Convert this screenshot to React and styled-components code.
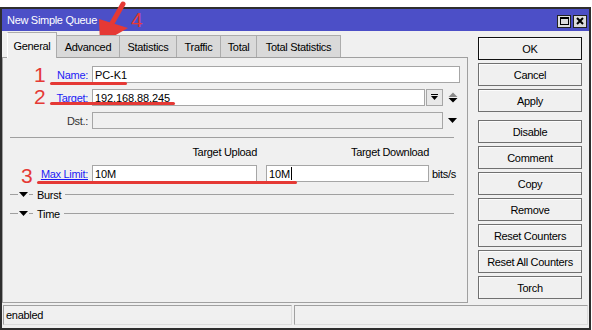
import React from 'react';
import styled, { createGlobalStyle } from 'styled-components';

const GlobalStyle = createGlobalStyle`
  html, body {
    margin: 0;
    padding: 0;
    background: #fff;
  }
  body {
    font-family: "Liberation Sans", Arial, sans-serif;
    font-size: 11px;
    letter-spacing: -0.3px;
    color: #000;
  }
`;

const Root = styled.div`
  position: relative;
  width: 592px;
  height: 330px;
  overflow: hidden;
  background: #fff;
`;

const Window = styled.div`
  margin-top: 7px;
  width: 591px;
  height: 323px;
  box-sizing: border-box;
  border: 2px solid #2e2e2e;
  background: #f0f0f0;
  display: flex;
  flex-direction: column;
`;

const TitleBar = styled.div`
  height: 22px;
  flex: none;
  background: #4c4fc7;
  color: #fff;
  display: flex;
  align-items: center;
  justify-content: space-between;
  padding-left: 5px;
  padding-right: 2px;
`;

const TitleControls = styled.div`
  display: flex;
  gap: 2px;
  margin-top: 2px;
`;

const TitleButton = styled.div`
  width: 14px;
  height: 13px;
  box-sizing: border-box;
  border: 1px solid #222;
  background: #dcdcdc;
  display: flex;
  align-items: center;
  justify-content: center;
`;

const Body = styled.div`
  display: flex;
  height: 272px;
  flex: none;
`;

const LeftColumn = styled.div`
  width: 466px;
  display: flex;
  flex-direction: column;
`;

const TabStrip = styled.div`
  display: flex;
  align-items: flex-end;
  height: 26px;
  padding-left: 5px;
  position: relative;
  z-index: 1;
`;

const Tab = styled.div`
  box-sizing: border-box;
  width: ${p => p.$w}px;
  height: ${p => (p.$active ? 26 : 22)}px;
  margin-bottom: ${p => (p.$active ? -1 : 0)}px;
  background: ${p => (p.$active ? '#f0f0f0' : '#d9d9d9')};
  border: 1px solid #acacac;
  border-bottom: none;
  border-left-color: ${p => (p.$active ? '#fff' : '#acacac')};
  display: flex;
  align-items: center;
  justify-content: center;
  padding-top: ${p => (p.$active ? 0 : 1)}px;
  margin-left: ${p => (p.$first ? 0 : -1)}px;
`;

const Panel = styled.div`
  height: 246px;
  box-sizing: border-box;
  border: 1px solid #a0a0a0;
  background: #f0f0f0;
  padding: 8px 7px 0 0;
  display: flex;
  flex-direction: column;
`;

const Row = styled.div`
  display: flex;
  align-items: center;
  height: 17px;
  margin-top: ${p => p.$mt || 0}px;
`;

const Label = styled.div`
  width: 85px;
  margin-right: 4px;
  text-align: right;
  flex: none;
  color: ${p => (p.$link ? '#1c1cf5' : '#333')};
  text-decoration: ${p => (p.$under ? 'underline' : 'none')};
`;

const Field = styled.div`
  box-sizing: border-box;
  height: 17px;
  flex: ${p => (p.$w ? 'none' : '1')};
  width: ${p => (p.$w ? `${p.$w}px` : 'auto')};
  margin-left: ${p => p.$ml || 0}px;
  border: 1px solid #a6a6a6;
  background: ${p => (p.$disabled ? '#f0f0f0' : '#fff')};
  padding-left: 2px;
  display: flex;
  align-items: center;
  letter-spacing: -0.1px;
`;

const Caret = styled.span`
  display: inline-block;
  width: 1px;
  height: 13px;
  background: #000;
  margin-left: 1px;
`;

const DropButton = styled.div`
  box-sizing: border-box;
  width: 17px;
  height: 17px;
  margin-left: 1px;
  border: 1px solid #a6a6a6;
  background: #e8e8e8;
  display: flex;
  align-items: center;
  justify-content: center;
  flex: none;
`;

const Slot = styled.div`
  width: 17px;
  flex: none;
  padding-left: 5px;
  box-sizing: border-box;
  display: flex;
  align-items: center;
`;

const Separator = styled.div`
  height: 1px;
  background: #a0a0a0;
  margin: 8px 6px 0 7px;
`;

const HeaderRow = styled.div`
  display: flex;
  height: 13px;
  line-height: 13px;
  margin-top: 8px;
  padding-left: 89px;
  gap: 9px;
`;

const HeaderCell = styled.div`
  width: ${p => p.$w}px;
  text-align: right;
`;

const Unit = styled.div`
  margin-left: 3px;
`;

const GroupRow = styled.div`
  display: flex;
  align-items: center;
  height: 13px;
  margin: 6px 6px 0 7px;
`;

const Rule = styled.div`
  height: 1px;
  background: #a0a0a0;
  flex: ${p => (p.$w ? 'none' : '1')};
  width: ${p => (p.$w ? `${p.$w}px` : 'auto')};
  margin-left: ${p => p.$ml || 0}px;
`;

const TriWrap = styled.span`
  display: flex;
  margin-left: 1px;
`;

const GroupLabel = styled.div`
  margin: 0 4px;
`;

const ButtonColumn = styled.div`
  width: 104px;
  margin-left: 10px;
  padding-top: 6px;
  display: flex;
  flex-direction: column;
  gap: 3px;
`;

const Button = styled.div`
  box-sizing: border-box;
  height: 23px;
  border: 1px solid ${p => (p.$default ? '#111' : '#707070')};
  box-shadow: inset 1px 1px 0 #fcfcfc;
  background: #f0f0f0;
  display: flex;
  align-items: center;
  justify-content: center;
  margin-top: ${p => p.$mt || 0}px;
`;

const StatusBar = styled.div`
  display: flex;
  gap: 2px;
  height: 20px;
  margin: 2px 1px 0 1px;
`;

const StatusCell = styled.div`
  box-sizing: border-box;
  width: ${p => (p.$w ? `${p.$w}px` : 'auto')};
  flex: ${p => (p.$w ? 'none' : '1')};
  border: 1px solid #a0a0a0;
  border-right-color: #dcdcdc;
  border-bottom-color: #dcdcdc;
  padding-left: 2px;
  display: flex;
  align-items: center;
`;

const Mark = styled.div`
  position: absolute;
  left: ${p => p.$x}px;
  top: ${p => p.$y}px;
  font-size: 21px;
  line-height: 21px;
  letter-spacing: 0;
  color: #e53935;
`;

const Underline = styled.div`
  position: absolute;
  left: ${p => p.$x}px;
  top: ${p => p.$y}px;
  width: ${p => p.$w}px;
  height: 3px;
  border-radius: 2px;
  background: #e53935;
`;

const ArrowLayer = styled.svg`
  position: absolute;
  left: 0;
  top: 0;
`;

const tabs = [
  ['General', 50],
  ['Advanced', 64],
  ['Statistics', 58],
  ['Traffic', 45],
  ['Total', 37],
  ['Total Statistics', 85],
];

const buttons = [
  ['OK', 0, true],
  ['Cancel'],
  ['Apply'],
  ['Disable', 5],
  ['Comment'],
  ['Copy'],
  ['Remove'],
  ['Reset Counters'],
  ['Reset All Counters'],
  ['Torch'],
];

const DownTri = ({ color = '#000' }) => (
  <svg width="9" height="5" viewBox="0 0 9 5">
    <polygon points="0,0 9,0 4.5,5" fill={color} />
  </svg>
);

function Group({ label }) {
  return (
    <GroupRow>
      <Rule $w={8} />
      <TriWrap>
        <DownTri />
      </TriWrap>
      <Rule $w={4} $ml={1} />
      <GroupLabel>{label}</GroupLabel>
      <Rule />
    </GroupRow>
  );
}

export default function App() {
  return (
    <Root>
      <GlobalStyle />
      <Window>
        <TitleBar>
          <span>New Simple Queue</span>
          <TitleControls>
            <TitleButton>
              <svg width="9" height="8" viewBox="0 0 9 8">
                <rect x="0.5" y="0.5" width="8" height="7" fill="none" stroke="#000" />
                <rect x="0" y="0" width="9" height="2" fill="#000" />
              </svg>
            </TitleButton>
            <TitleButton>
              <svg width="8" height="8" viewBox="0 0 8 8">
                <path d="M1 1 L7 7 M7 1 L1 7" stroke="#000" strokeWidth="2" />
              </svg>
            </TitleButton>
          </TitleControls>
        </TitleBar>
        <Body>
          <LeftColumn>
            <TabStrip>
              {tabs.map(([name, w], i) => (
                <Tab key={name} $w={w} $active={i === 0} $first={i === 0}>
                  {name}
                </Tab>
              ))}
            </TabStrip>
            <Panel>
              <Row>
                <Label $link>Name:</Label>
                <Field>PC-K1</Field>
              </Row>
              <Row $mt={6}>
                <Label $link $under>Target:</Label>
                <Field>192.168.88.245</Field>
                <DropButton>
                  <svg width="7" height="7" viewBox="0 0 7 7">
                    <rect x="0" y="0" width="7" height="1" fill="#000" />
                    <polygon points="0,2 7,2 3.5,6" fill="#000" />
                  </svg>
                </DropButton>
                <Slot>
                  <svg width="10" height="11" viewBox="0 0 10 11">
                    <polygon points="0.5,5 9.5,5 5,0.5" fill="#8a8a8a" />
                    <polygon points="0.5,6 9.5,6 5,10.5" fill="#000" />
                  </svg>
                </Slot>
              </Row>
              <Row $mt={6}>
                <Label>Dst.:</Label>
                <Field $disabled />
                <Slot>
                  <DownTri />
                </Slot>
              </Row>
              <Separator />
              <HeaderRow>
                <HeaderCell $w={165}>Target Upload</HeaderCell>
                <HeaderCell $w={163}>Target Download</HeaderCell>
              </HeaderRow>
              <Row $mt={6}>
                <Label $link $under>Max Limit:</Label>
                <Field $w={165}>10M</Field>
                <Field $w={163} $ml={9}>
                  10M<Caret />
                </Field>
                <Unit>bits/s</Unit>
              </Row>
              <Group label="Burst" />
              <Group label="Time" />
            </Panel>
          </LeftColumn>
          <ButtonColumn>
            {buttons.map(([name, mt, def]) => (
              <Button key={name} $mt={mt} $default={def}>
                {name}
              </Button>
            ))}
          </ButtonColumn>
        </Body>
        <StatusBar>
          <StatusCell $w={289}>enabled</StatusCell>
          <StatusCell />
        </StatusBar>
      </Window>

      <Mark $x={34} $y={64}>1</Mark>
      <Mark $x={34} $y={86}>2</Mark>
      <Mark $x={21} $y={165}>3</Mark>
      <Mark $x={131} $y={9}>4</Mark>
      <Underline $x={50} $y={82} $w={77} />
      <Underline $x={50} $y={102} $w={125} />
      <Underline $x={37} $y={181} $w={260} />
      <ArrowLayer width="140" height="50" viewBox="0 0 140 50">
        <line x1="123" y1="4" x2="111" y2="25" stroke="#e53935" strokeWidth="5" strokeLinecap="round" />
        <polygon points="99,19 128,28 100,44" fill="#e53935" />
      </ArrowLayer>
    </Root>
  );
}
